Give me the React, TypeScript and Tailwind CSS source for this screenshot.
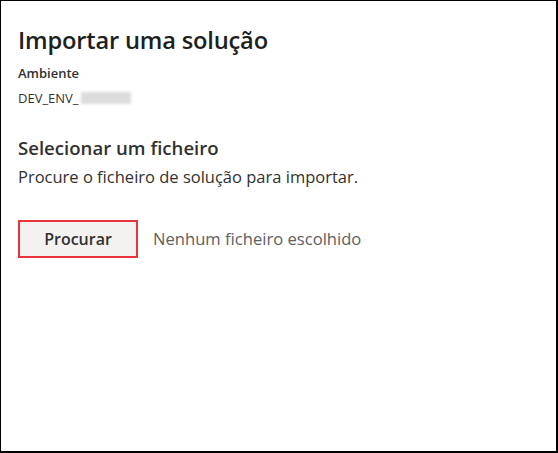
export default function App() {
  return (
    <div
      className="w-[558px] h-[453px] bg-white border-t border-l border-r-2 border-b-2 border-black overflow-hidden"
      style={{ fontFamily: '"Open Sans", "Noto Sans", sans-serif' }}
    >
      <div className="pl-[17px] pt-[20px]">
        <h1 className="text-[23.7px] font-semibold text-[#201f1e] leading-[38px] tracking-[-0.2px]">
          Importar uma solução
        </h1>
        <div className="mt-[4px] text-[13px] font-semibold text-[#323130] leading-[20px]">Ambiente</div>
        <div className="mt-[6px] flex items-center text-[13px] text-[#323130] leading-[18px]">
          <span>DEV_ENV_</span>
          <span className="ml-[2px] inline-block w-[50px] h-[12px] bg-[#dcdcdc] blur-[1.5px]" />
        </div>

        <h2 className="mt-[28px] text-[18.6px] font-semibold text-[#323130] leading-[26px]">
          Selecionar um ficheiro
        </h2>
        <p className="mt-[4px] text-[16.5px] text-[#323130] leading-[24px]">
          Procure o ficheiro de solução para importar.
        </p>

        <div className="mt-[31px] flex items-center">
          <button className="w-[120px] h-[38px] border-2 border-[#e8353b] bg-[#f3f2f1] text-[16px] font-semibold text-[#323130]">
            Procurar
          </button>
          <span className="ml-[15px] text-[16.6px] text-[#605e5c]">Nenhum ficheiro escolhido</span>
        </div>
      </div>
    </div>
  );
}
